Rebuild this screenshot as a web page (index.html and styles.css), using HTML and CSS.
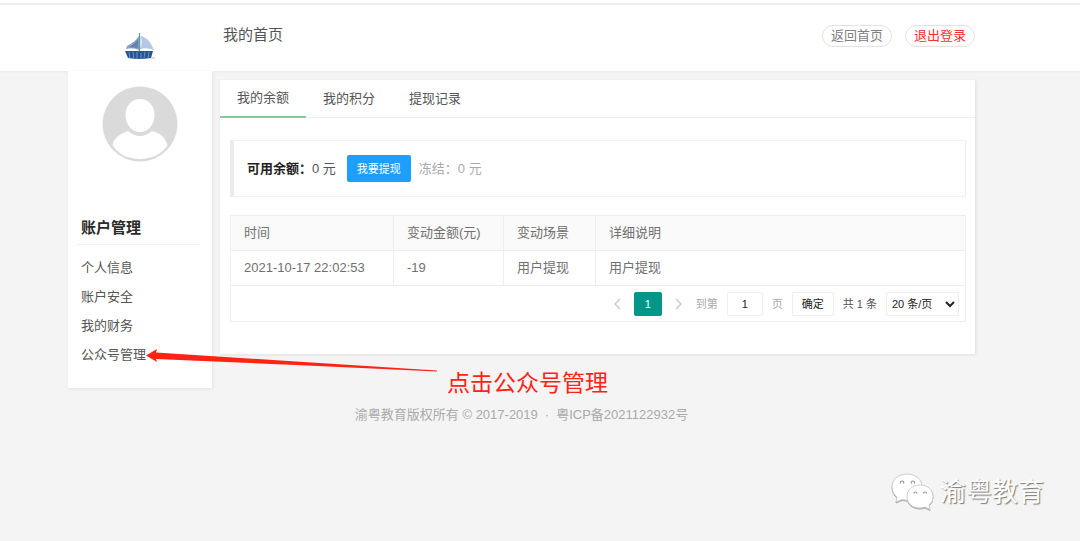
FILE: index.html
```html
<!DOCTYPE html>
<html lang="zh-CN">
<head>
<meta charset="utf-8">
<title>我的首页</title>
<link rel="stylesheet" href="styles.css">
</head>
<body>
<header class="header">
  <div class="container header-row">
    <a class="logo" href="#" aria-label="首页">
      <svg width="32" height="28" viewBox="0 0 32 28">
        <path d="M14 3C11 7 8 10 2 13L1 16Q8 14 14 17Z" fill="#8ba2c8"/>
        <path d="M13 6Q10 11 4 14L13 15Z" fill="#6482b0"/>
        <path d="M16 3C23 5 26 10 29 17Q22 14 15 16Z" fill="#b4c7e4"/>
        <path d="M15 3Q19 9 15 15Z" fill="#e6edf6"/>
        <path d="M14.500 0V19" stroke="#559d91" stroke-width="1.200"/>
        <path d="M0 18H28L26 25Q14 27 3 25Z" fill="#285394"/>
        <path d="M4 19l1 6M8 19l1 7M12 19v7M16 20v6M20 19l-1 6M24 19l-1 6" stroke="#6e93c4" stroke-width="1"/>
        <path d="M26 25h4" stroke="#a8b5d2" stroke-width="1"/>
      </svg>
    </a>
    <h1 class="page-title">我的首页</h1>
    <nav class="actions">
      <a class="pill" href="#">返回首页</a>
      <a class="pill pill-danger" href="#">退出登录</a>
    </nav>
  </div>
</header>

<div class="container layout">
  <aside class="sidebar">
    <svg class="avatar" viewBox="0 0 76 76" role="img" aria-label="头像">
      <circle cx="38" cy="38" r="37.500" fill="#dadada"/>
      <path d="M38 13C47 13 52.500 20 52.500 29C52.500 39 46 46 38 46S23.500 39 23.500 29C23.500 20 29 13 38 13Z" fill="#fff"/>
      <path d="M26 45Q38 55 50 45C58 47 63 51 65.500 59C60 68 50 73 38 73S16 68 10.500 59C12 52 19 47 26 45Z" fill="#fff"/>
    </svg>
    <h2 class="side-title">账户管理</h2>
    <nav class="side-nav">
      <a href="#">个人信息</a>
      <a href="#">账户安全</a>
      <a href="#">我的财务</a>
      <a href="#">公众号管理</a>
    </nav>
  </aside>

  <main class="card">
    <nav class="tabs">
      <a class="tab tab-active" href="#">我的余额</a>
      <a class="tab" href="#">我的积分</a>
      <a class="tab" href="#">提现记录</a>
    </nav>
    <div class="content">
      <div class="balance">
        <span><b>可用余额：</b>0 元</span>
        <button class="withdraw" type="button">我要提现</button>
        <span class="frozen">冻结：0 元</span>
      </div>
      <div class="records">
        <table class="grid">
          <colgroup><col class="col-time"><col class="col-amount"><col class="col-scene"><col></colgroup>
          <thead><tr><th>时间</th><th>变动金额(元)</th><th>变动场景</th><th>详细说明</th></tr></thead>
          <tbody><tr><td>2021-10-17 22:02:53</td><td>-19</td><td>用户提现</td><td>用户提现</td></tr></tbody>
        </table>
        <div class="pager">
          <button class="arrow-btn" type="button" aria-label="上一页"><svg width="8" height="12" viewBox="0 0 8 12"><path d="M7 1L2 6l5 5"/></svg></button>
          <button class="page-current" type="button">1</button>
          <button class="arrow-btn" type="button" aria-label="下一页"><svg width="8" height="12" viewBox="0 0 8 12"><path d="M1 1l5 5-5 5"/></svg></button>
          <label class="jump">到第<input class="box page-input" type="text" value="1">页</label>
          <button class="box confirm" type="button">确定</button>
          <span>共 1 条</span>
          <select class="box size" aria-label="每页条数"><option>20 条/页</option></select>
        </div>
      </div>
    </div>
  </main>
</div>

<footer class="container footer">渝粤教育版权所有 © 2017-2019<span class="dot">·</span><a href="#">粤ICP备2021122932号</a></footer>

<svg class="pointer" width="294" height="24" viewBox="0 0 294 24" aria-hidden="true">
  <path d="M0 6.500L11 0L10 3.500L150 12.500L291 21.500V22.500L150 16L10 10L11 13Z" fill="#ff2314"/>
</svg>
<div class="note">点击公众号管理</div>

<div class="watermark">
  <svg width="44" height="38" viewBox="0 0 44 38" aria-hidden="true">
    <g class="bubbles">
      <path d="M16 1C7 1 1 6.500 1 14C1 18.500 3 21.500 6 24L5 29L11 26.500Q16 28 21 26C29 24 31 19 31 14C31 6.500 25 1 16 1Z"/>
      <path d="M29 12C21 12 16 17 16 23.500S21 35 29 35Q32 35 34 34L39 36.500L38 32Q42 29 42 23.500C42 17 37 12 29 12Z"/>
    </g>
    <g fill="none" stroke="#999" stroke-width="1.200">
      <path d="M9.500 10.500a1.700 1.700 0 1 1 3 0M20.500 10.500a1.700 1.700 0 1 1 3 0M23 20.500a1.500 1.500 0 1 1 3 0M32.500 20.500a1.500 1.500 0 1 1 3 0"/>
    </g>
  </svg>
  <span>渝粤教育</span>
</div>
</body>
</html>
```

FILE: styles.css
```css
* { box-sizing: border-box; }
body {
  margin: 0;
  min-height: 100vh;
  position: relative;
  background: #f4f4f4;
  color: #555;
  font: 13px/20px "Liberation Sans", "Noto Sans CJK SC", sans-serif;
}
a { color: inherit; text-decoration: none; }
button, input, select { font: inherit; margin: 0; }
.container { padding: 0 105px 0 68px; }

.header {
  border-top: 3px solid #fff;
  background: #fff;
  box-shadow: 0 1px 2px #e8e8e8;
}
.header-row {
  display: flex;
  height: 68px;
  border-top: 2px solid #eee;
}
.logo { width: 144px; padding: 28px 0 0 57px; }
.page-title { margin: 20px 0 0 11px; font-size: 15px; line-height: 20px; font-weight: 400; }
.actions { display: flex; gap: 13px; margin: 20px 0 0 auto; }
.pill {
  height: 22px;
  padding: 0 8px;
  border: 1px solid #e2e2e2;
  border-radius: 11px;
  color: #808080;
}
.pill-danger { color: #ff2c2c; }

.layout { display: flex; align-items: flex-start; gap: 8px; }
.sidebar {
  width: 144px;
  flex: none;
  padding: 15px 12px 19px 9px;
  background: #fff;
  box-shadow: 1px 1px 3px #e4e4e4;
}
.avatar { display: block; width: 76px; height: 76px; margin: 0 auto 56px 25px; }
.side-title {
  margin: 0 0 8px;
  padding: 0 4px 6px;
  border-bottom: 1px solid #f2f2f2;
  color: #2a2a2a;
  font-size: 15px;
  line-height: 20px;
}
.side-nav { display: grid; padding-left: 4px; }
.side-nav a { line-height: 29px; }

.card {
  flex: 1;
  min-width: 0;
  margin-top: 9px;
  background: #fff;
  box-shadow: 1px 1px 3px #e0e0e0;
}
.tabs { display: flex; border-bottom: 1px solid #eee; }
.tab { padding: 0 17px; line-height: 37px; }
.tab-active { margin-bottom: -1px; border-bottom: 2px solid #84c898; line-height: 36px; }
.content { padding: 22px 9px 32px 10px; }
.balance {
  display: flex;
  align-items: center;
  height: 57px;
  margin-bottom: 18px;
  padding-left: 13px;
  border: 1px solid #f0f0f0;
  border-left: 4px solid #ebebeb;
}
.balance b { color: #222; font-weight: 700; }
.withdraw {
  height: 27px;
  margin: 0 8px 0 11px;
  padding: 0 10px;
  border: 0;
  border-radius: 2px;
  background: #1e9fff;
  color: #fff;
  font-size: 11px;
}
.frozen { color: #aaa; }

.records { border: 1px solid #eee; }
.grid { width: 100%; border-collapse: separate; border-spacing: 0; table-layout: fixed; color: #707070; }
.col-time { width: 163px; }
.col-amount { width: 110px; }
.col-scene { width: 92px; }
.grid th, .grid td {
  height: 35px;
  padding: 0 13px;
  border-right: 1px solid #eee;
  border-bottom: 1px solid #eee;
  text-align: left;
  font-weight: 400;
}
.grid th { background: #fafafa; }
.grid th:last-child, .grid td:last-child { border-right: 0; }
.pager {
  display: flex;
  align-items: center;
  justify-content: flex-end;
  gap: 9px;
  height: 35px;
  padding-right: 6px;
  color: #555;
  font-size: 11px;
}
.arrow-btn { display: flex; padding: 0; border: 0; background: none; margin: 0 4px; }
.arrow-btn svg { fill: none; stroke: #ccc; stroke-width: 1.5; }
.page-current { width: 28px; height: 24px; padding: 0; border: 0; border-radius: 2px; background: #009688; color: #fff; }
.jump { display: flex; align-items: center; gap: 9px; color: #aaa; }
.box { height: 24px; padding: 0; border: 1px solid #eee; border-radius: 2px; background: #fff; color: #222; }
.page-input { width: 36px; text-align: center; }
.confirm { width: 42px; }
.size { width: 73px; padding-left: 1px; }

.footer { margin-top: 17px; text-align: center; color: #aaa; }
.dot { margin: 0 7px; }

.pointer { position: absolute; left: 146px; top: 349px; }
.note { position: absolute; left: 447px; top: 368px; color: #ff2314; font-size: 23px; line-height: 30px; }
.watermark {
  position: absolute;
  left: 891px;
  top: 473px;
  display: flex;
  align-items: center;
  gap: 5px;
  color: #fff;
  font-size: 26px;
  line-height: 38px;
  white-space: nowrap;
  text-shadow: 1px 1px 1px #777;
}
.bubbles { fill: #fff; stroke: #ccc; stroke-width: 1; filter: drop-shadow(0 1px 0 #aaa); }
```
